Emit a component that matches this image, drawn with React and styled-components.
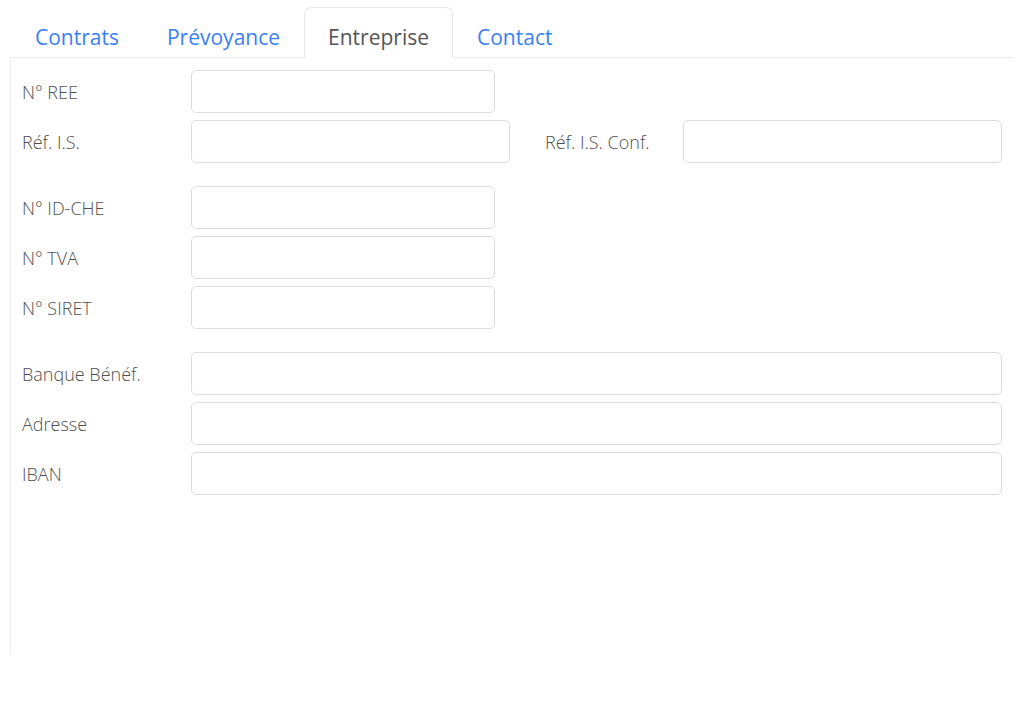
import React from "react";
import styled, { createGlobalStyle } from "styled-components";

const GlobalStyle = createGlobalStyle`
  body {
    margin: 0;
    background: #fff;
    font-family: "Open Sans", "Noto Sans", sans-serif;
  }
`;

const Page = styled.div`
  padding: 7px 10px 0 10px;
`;

const TabBar = styled.div`
  display: flex;
  border-bottom: 1px solid #ebebeb;
  padding-left: 1px;
`;

const Tab = styled.div`
  padding: 7px 23px 0;
  height: 51px;
  box-sizing: border-box;
  display: flex;
  align-items: center;
  font-size: 21px;
  color: ${(p) => (p.active ? "#555" : "#3a7ff6")};
  background: ${(p) => (p.active ? "#fff" : "transparent")};
  border: 1px solid ${(p) => (p.active ? "#e6e6e6" : "transparent")};
  border-bottom: none;
  border-radius: 7px 7px 0 0;
  margin-bottom: -1px;
  cursor: pointer;
`;

const Panel = styled.div`
  border-left: 1px solid #ebebeb;
  height: 595px;
  box-sizing: border-box;
  padding: 12px 12px 0 11px;
`;

const Group = styled.div`
  display: flex;
  flex-direction: column;
  gap: 7px;
  margin-bottom: ${(p) => (p.last ? 0 : "23px")};
`;

const Row = styled.div`
  display: flex;
  align-items: center;
`;

const Label = styled.div`
  width: ${(p) => p.width || 169}px;
  flex-shrink: 0;
  font-size: 18px;
  font-weight: 300;
  color: #505050;
  padding-left: ${(p) => p.indent || 0}px;
  box-sizing: border-box;
`;

const Input = styled.input`
  height: 43px;
  box-sizing: border-box;
  width: ${(p) => (p.width ? `${p.width}px` : "auto")};
  flex: ${(p) => (p.width ? "none" : 1)};
  border: 1px solid #dcdde1;
  border-radius: 5px;
  outline: none;
  padding: 0 12px;
  font-size: 16px;
  font-family: inherit;
`;

const tabs = ["Contrats", "Prévoyance", "Entreprise", "Contact"];

const App = () => {
  return (
    <Page>
      <GlobalStyle />
      <TabBar>
        {tabs.map((t) => (
          <Tab key={t} active={t === "Entreprise"}>
            {t}
          </Tab>
        ))}
      </TabBar>
      <Panel>
        <Group>
          <Row>
            <Label>N° REE</Label>
            <Input width={304} />
          </Row>
          <Row>
            <Label>Réf. I.S.</Label>
            <Input width={319} />
            <Label width={173} indent={35}>
              Réf. I.S. Conf.
            </Label>
            <Input />
          </Row>
        </Group>
        <Group>
          <Row>
            <Label>N° ID-CHE</Label>
            <Input width={304} />
          </Row>
          <Row>
            <Label>N° TVA</Label>
            <Input width={304} />
          </Row>
          <Row>
            <Label>N° SIRET</Label>
            <Input width={304} />
          </Row>
        </Group>
        <Group last>
          <Row>
            <Label>Banque Bénéf.</Label>
            <Input />
          </Row>
          <Row>
            <Label>Adresse</Label>
            <Input />
          </Row>
          <Row>
            <Label>IBAN</Label>
            <Input />
          </Row>
        </Group>
      </Panel>
    </Page>
  );
};

export default App;
